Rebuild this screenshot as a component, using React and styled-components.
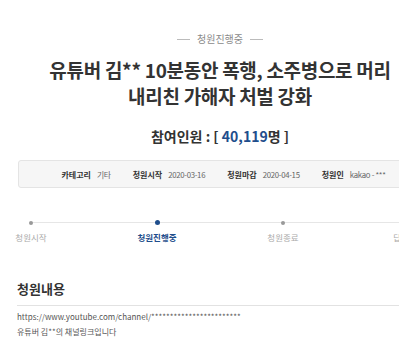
import React from "react";
import styled, { createGlobalStyle } from "styled-components";

const Global = createGlobalStyle`
  html, body { margin: 0; padding: 0; background: #fff; overflow: hidden; }
  body { font-family: "Noto Sans CJK KR", "Noto Sans", sans-serif; color: #333; }
`;

const Page = styled.div`
  width: 406px;
  padding: 33px 0 0 17px;
`;

const Status = styled.div`
  display: flex;
  align-items: center;
  justify-content: center;
  gap: 7px;
  font-size: 10px;
  line-height: 12px;
  color: #8a8a8a;
  &::before, &::after {
    content: "";
    width: 13px;
    height: 1px;
    background: #bbb;
  }
`;

const Title = styled.h1`
  margin: 12px 0 0;
  font-size: 19px;
  line-height: 26px;
  font-weight: 700;
  text-align: center;
  color: #333;
  letter-spacing: -0.3px;
`;

const Count = styled.div`
  margin-top: 18px;
  text-align: center;
  font-size: 14px;
  line-height: 18px;
  font-weight: 700;
  color: #333;
`;

const Num = styled.span`
  color: #1f4e8c;
`;

const InfoBox = styled.div`
  margin: 15px 0 0 1px;
  height: 26px;
  display: flex;
  align-items: center;
  justify-content: center;
  gap: 22px;
  padding-left: 6px;
  background: #f6f6f6;
  border: 1px solid #e4e4e4;
  border-radius: 3px;
  font-size: 8px;
`;

const Info = styled.span`
  display: flex;
  align-items: baseline;
  gap: 6px;
  color: #666;
  & > b { color: #333; font-weight: 700; }
`;

const Value = styled.span`
  font-size: 7.8px;
  letter-spacing: -0.3px;
`;

const Steps = styled.div`
  position: relative;
  margin-top: 30px;
  display: flex;
  justify-content: space-between;
`;

const Line = styled.div`
  position: absolute;
  left: 14px;
  right: 14px;
  top: 4px;
  height: 1px;
  background: #e6e6e6;
`;

const Step = styled.div`
  position: relative;
  width: 28px;
  display: flex;
  flex-direction: column;
  align-items: center;
  gap: 7px;
`;

const Dot = styled.span`
  width: ${p => (p.$on ? 5 : 4)}px;
  height: ${p => (p.$on ? 5 : 4)}px;
  margin-top: ${p => (p.$on ? 2 : 2.5)}px;
  border-radius: 50%;
  background: ${p => (p.$on ? "#1f4e8c" : "#999")};
`;

const StepLabel = styled.span`
  white-space: nowrap;
  font-size: 8.5px;
  line-height: 11px;
  color: ${p => (p.$on ? "#1f4e8c" : "#aaa")};
  font-weight: ${p => (p.$on ? 700 : 400)};
`;

const Section = styled.h2`
  margin: 37px 0 0;
  padding-bottom: 8px;
  border-bottom: 1px solid #e2e2e2;
  font-size: 13px;
  line-height: 17px;
  font-weight: 700;
  color: #333;
`;

const Body = styled.p`
  margin: 3px 0 0;
  font-size: 8px;
  line-height: 15px;
  color: #555;
`;

const steps = ["청원시작", "청원진행중", "청원종료", "답변완료"];

export default function App() {
  return (
    <>
      <Global />
      <Page>
        <Status>청원진행중</Status>
        <Title>
          유튜버 김** 10분동안 폭행, 소주병으로 머리
          <br />
          내리친 가해자 처벌 강화
        </Title>
        <Count>
          참여인원 : [ <Num>40,119</Num>명 ]
        </Count>
        <InfoBox>
          <Info><b>카테고리</b><Value>기타</Value></Info>
          <Info><b>청원시작</b><Value>2020-03-16</Value></Info>
          <Info><b>청원마감</b><Value>2020-04-15</Value></Info>
          <Info><b>청원인</b><Value>kakao - ***</Value></Info>
        </InfoBox>
        <Steps>
          <Line />
          {steps.map((s, i) => (
            <Step key={s}>
              <Dot $on={i === 1} />
              <StepLabel $on={i === 1}>{s}</StepLabel>
            </Step>
          ))}
        </Steps>
        <Section>청원내용</Section>
        <Body>
          https://www.youtube.com/channel/************************
          <br />
          유튜버 김**의 채널링크입니다
        </Body>
      </Page>
    </>
  );
}
